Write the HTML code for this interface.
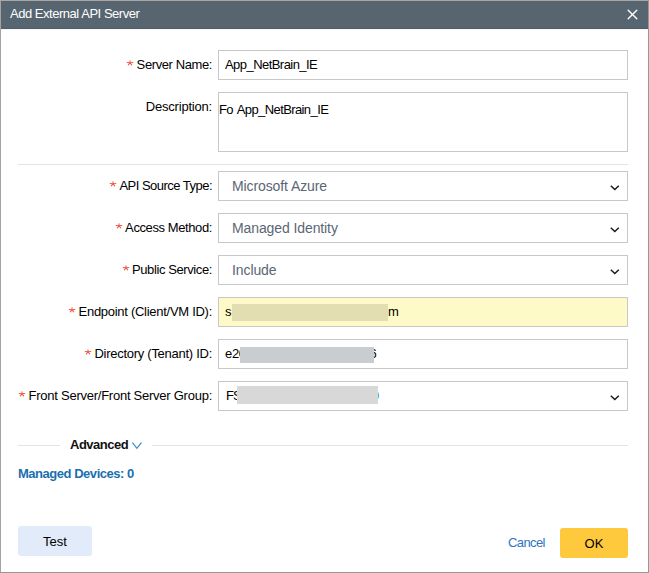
<!DOCTYPE html>
<html><head><meta charset="utf-8">
<style>
html,body{margin:0;padding:0;background:#fff;}
body{width:649px;height:573px;position:relative;overflow:hidden;font-family:"Liberation Sans",sans-serif;font-size:13px;color:#222;}
.abs{position:absolute;}
.frame{position:absolute;left:0;top:0;width:647px;height:571px;border:1px solid #9a9693;border-top-color:#aaa6a3;border-left-color:#a6a29f;}
.title{position:absolute;left:1px;top:1px;width:647px;height:27px;background:#56656f;border-bottom:1px solid #4f5e69;box-shadow:0 1px 0 #f6f5f3;}
.ttext{position:absolute;left:9px;top:-1px;height:28px;line-height:28px;color:#fff;font-size:13px;letter-spacing:-0.47px;white-space:nowrap;}
.lbl{position:absolute;right:437px;white-space:nowrap;letter-spacing:-0.4px;color:#000;height:30px;line-height:30px;}
.lbl .st{overflow:visible;margin-right:3.5px;vertical-align:baseline;position:relative;top:-3px;}
.box{position:absolute;left:218px;width:408px;height:28px;border:1px solid #c8c8c8;background:#fff;}
.itxt{position:absolute;left:7px;top:0;line-height:28px;white-space:nowrap;letter-spacing:-0.4px;color:#000;}
.stxt{position:absolute;left:13px;top:-0.5px;line-height:28px;white-space:nowrap;font-size:14px;color:#5b6673;letter-spacing:-0.1px;}
.chev{position:absolute;left:391px;top:13px;}
.sep{position:absolute;height:1px;background:#e3e3e3;}
.blur{position:absolute;}
</style></head><body>
<div class="frame"></div>
<div class="title"><div class="ttext">Add External API Server</div>
<svg class="abs" style="left:625px;top:7px" width="14" height="14" viewBox="0 0 14 14"><path d="M2.2 2.2L10.8 10.8M10.8 2.2L2.2 10.8" stroke="#fff" stroke-width="1.4" stroke-linecap="round" fill="none"/></svg>
</div>

<div class="lbl" style="top:50px"><svg class="st" width="7" height="6" viewBox="0 0 7 6"><path d="M4 2.8V0.7M4 2.8L1.2 2.6M4 2.8L6.8 2.6M4 2.8L2.3 4.9M4 2.8L5.7 4.9" stroke="#ec5b4b" stroke-width="1.05" stroke-linecap="round" fill="none"/></svg>Server Name:</div>
<div class="box" style="top:50px"><div class="itxt" style="left:6px;letter-spacing:-0.55px">App_NetBrain_IE</div></div>

<div class="lbl" style="top:97px;line-height:20px;letter-spacing:-0.2px">Description:</div>
<div class="box" style="top:92px;height:58px"><div class="itxt" style="left:0px;top:7px;line-height:20px;letter-spacing:-0.6px;word-spacing:1.5px">Fo App_NetBrain_IE</div></div>

<div class="sep" style="left:18px;top:164px;width:610px"></div>

<div class="lbl" style="top:171px;letter-spacing:-0.52px"><svg class="st" width="7" height="6" viewBox="0 0 7 6"><path d="M4 2.8V0.7M4 2.8L1.2 2.6M4 2.8L6.8 2.6M4 2.8L2.3 4.9M4 2.8L5.7 4.9" stroke="#ec5b4b" stroke-width="1.05" stroke-linecap="round" fill="none"/></svg>API Source Type:</div>
<div class="box" style="top:171px"><div class="stxt">Microsoft Azure</div>
<svg class="chev" width="10" height="6" viewBox="0 0 10 6"><path d="M0.8 0.8L4.8 4.6L8.8 0.8" stroke="#1a1a1a" stroke-width="1.45" fill="none"/></svg></div>

<div class="lbl" style="top:213px"><svg class="st" width="7" height="6" viewBox="0 0 7 6"><path d="M4 2.8V0.7M4 2.8L1.2 2.6M4 2.8L6.8 2.6M4 2.8L2.3 4.9M4 2.8L5.7 4.9" stroke="#ec5b4b" stroke-width="1.05" stroke-linecap="round" fill="none"/></svg>Access Method:</div>
<div class="box" style="top:213px"><div class="stxt">Managed Identity</div>
<svg class="chev" width="10" height="6" viewBox="0 0 10 6"><path d="M0.8 0.8L4.8 4.6L8.8 0.8" stroke="#1a1a1a" stroke-width="1.45" fill="none"/></svg></div>

<div class="lbl" style="top:255px"><svg class="st" width="7" height="6" viewBox="0 0 7 6"><path d="M4 2.8V0.7M4 2.8L1.2 2.6M4 2.8L6.8 2.6M4 2.8L2.3 4.9M4 2.8L5.7 4.9" stroke="#ec5b4b" stroke-width="1.05" stroke-linecap="round" fill="none"/></svg>Public Service:</div>
<div class="box" style="top:255px"><div class="stxt">Include</div>
<svg class="chev" width="10" height="6" viewBox="0 0 10 6"><path d="M0.8 0.8L4.8 4.6L8.8 0.8" stroke="#1a1a1a" stroke-width="1.45" fill="none"/></svg></div>

<div class="lbl" style="top:297px;letter-spacing:-0.28px"><svg class="st" width="7" height="6" viewBox="0 0 7 6"><path d="M4 2.8V0.7M4 2.8L1.2 2.6M4 2.8L6.8 2.6M4 2.8L2.3 4.9M4 2.8L5.7 4.9" stroke="#ec5b4b" stroke-width="1.05" stroke-linecap="round" fill="none"/></svg>Endpoint (Client/VM ID):</div>
<div class="box" style="top:297px;background:#fefac7"><div class="itxt" style="left:6px">s</div>
<div class="blur" style="left:13px;top:6px;width:156px;height:17px;background:#e2deb2"></div>
<div class="itxt" style="left:169px">m</div></div>

<div class="lbl" style="top:339px;letter-spacing:-0.27px"><svg class="st" width="7" height="6" viewBox="0 0 7 6"><path d="M4 2.8V0.7M4 2.8L1.2 2.6M4 2.8L6.8 2.6M4 2.8L2.3 4.9M4 2.8L5.7 4.9" stroke="#ec5b4b" stroke-width="1.05" stroke-linecap="round" fill="none"/></svg>Directory (Tenant) ID:</div>
<div class="box" style="top:339px"><div class="itxt" style="left:6px;letter-spacing:-0.3px">e20</div>
<div class="itxt" style="left:150.5px">6</div>
<div class="blur" style="left:21px;top:7px;width:134px;height:16px;background:#cacdd0"></div></div>

<div class="lbl" style="top:381px;letter-spacing:-0.25px"><svg class="st" width="7" height="6" viewBox="0 0 7 6"><path d="M4 2.8V0.7M4 2.8L1.2 2.6M4 2.8L6.8 2.6M4 2.8L2.3 4.9M4 2.8L5.7 4.9" stroke="#ec5b4b" stroke-width="1.05" stroke-linecap="round" fill="none"/></svg>Front Server/Front Server Group:</div>
<div class="box" style="top:381px"><div class="itxt" style="letter-spacing:-0.9px">FS</div>
<div class="itxt" style="left:153px;color:#2f8fe0">0</div>
<div class="blur" style="left:18px;top:4px;width:141px;height:18px;background:#d8d8d8"></div>
<svg class="chev" width="10" height="6" viewBox="0 0 10 6"><path d="M0.8 0.8L4.8 4.6L8.8 0.8" stroke="#1a1a1a" stroke-width="1.45" fill="none"/></svg></div>

<div class="sep" style="left:18px;top:445px;width:42px"></div>
<div class="abs" style="left:70px;top:436px;line-height:18px;font-weight:bold;letter-spacing:-0.5px;color:#111">Advanced</div>
<svg class="abs" style="left:131px;top:442px" width="12" height="8" viewBox="0 0 12 8"><path d="M1.4 0.6L5.9 6.3L10.4 0.6" stroke="#4a8dc6" stroke-width="1.3" fill="none"/></svg>
<div class="sep" style="left:152px;top:445px;width:476px"></div>

<div class="abs" style="left:18px;top:465px;line-height:18px;font-weight:bold;letter-spacing:-0.47px;color:#1a6fae">Managed Devices: 0</div>

<div class="abs" style="left:18px;top:526px;width:74px;height:30px;border-radius:3px;background:#e2ebf9;text-align:center;line-height:32px;color:#000">Test</div>
<div class="abs" style="left:508px;top:534px;line-height:18px;color:#2e74c2;letter-spacing:-0.6px">Cancel</div>
<div class="abs" style="left:560px;top:528px;width:68px;height:30px;border-radius:3px;background:#fec93d;text-align:center;line-height:32px;color:#000">OK</div>
</body></html>
